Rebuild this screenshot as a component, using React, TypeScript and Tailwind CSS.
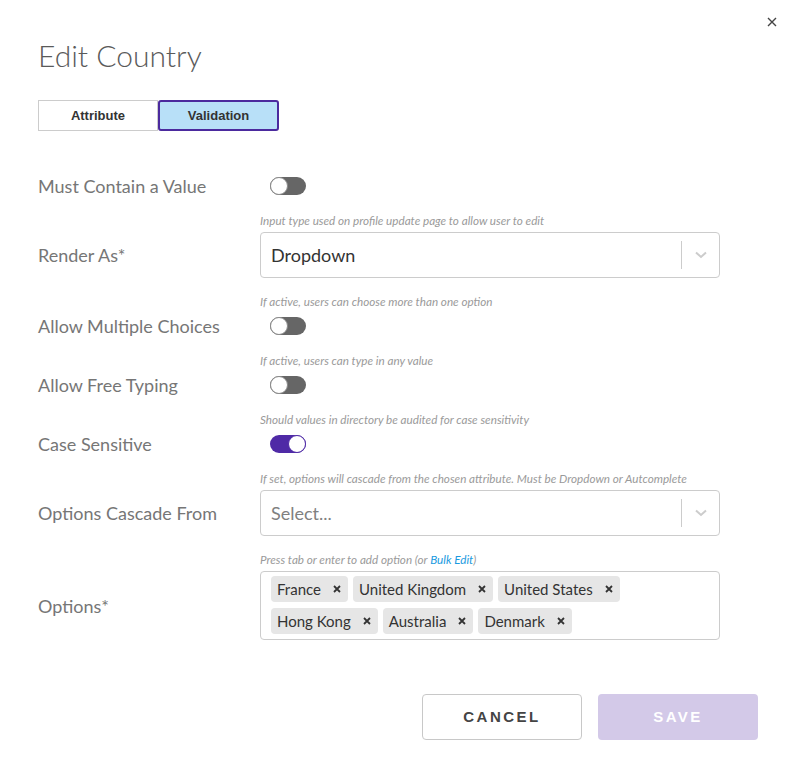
import { useState } from "react";

const lato = { fontFamily: "Lato, 'Open Sans', sans-serif" };

function Toggle({ on }: { on?: boolean }) {
  return (
    <div className="flex h-[25px] items-center pl-[10px]">
      <div
        className={
          "relative h-[18px] w-[36px] rounded-full " + (on ? "bg-[#4f2aa6]" : "bg-[#666666]")
        }
      >
        <div
          className={
            "absolute top-0 h-[18px] w-[18px] rounded-full border bg-white " +
            (on ? "right-0 border-[#4f2aa6]" : "left-0 border-[#8a8a8a]")
          }
        />
      </div>
    </div>
  );
}

function Select({ value, placeholder }: { value?: string; placeholder?: string }) {
  return (
    <div className="flex h-[46px] items-center rounded border border-[#cccccc] bg-white">
      <div
        className={"flex-1 pl-[10px] text-[18px] " + (value ? "text-[#333333]" : "text-[#808080]")}
      >
        {value ?? placeholder}
      </div>
      <div className="h-[28px] w-px bg-[#cccccc]" />
      <div className="flex w-[37px] justify-center">
        <svg width="14" height="8" viewBox="0 0 14 8" fill="none">
          <path d="M2 1.5l5 4.5 5-4.5" stroke="#cccccc" strokeWidth="2" />
        </svg>
      </div>
    </div>
  );
}

function Tag({ label }: { label: string }) {
  return (
    <div className="flex h-[26px] items-center gap-[12px] rounded-sm bg-[#e6e6e6] pl-[6px] pr-[7px] text-[15px] text-[#333333]">
      <span>{label}</span>
      <svg width="8" height="8" viewBox="0 0 8 8">
        <path d="M1 1l6 6M7 1l-6 6" stroke="#333333" strokeWidth="1.8" />
      </svg>
    </div>
  );
}

function Row({
  label,
  hint,
  className = "",
  children,
}: {
  label: string;
  hint?: React.ReactNode;
  className?: string;
  children: React.ReactNode;
}) {
  return (
    <div className={"grid grid-cols-[222px_460px] items-center " + className}>
      {hint ? (
        <>
          <div />
          <div className="mb-[5px] whitespace-nowrap text-[11.7px] italic leading-[14px] text-[#9a9a9a]">
            {hint}
          </div>
        </>
      ) : null}
      <div className="text-[18px] leading-[20px] text-[#767676]">{label}</div>
      <div>{children}</div>
    </div>
  );
}

export default function App() {
  const [tab, setTab] = useState("validation");
  const tags = ["France", "United Kingdom", "United States", "Hong Kong", "Australia", "Denmark"];

  return (
    <div className="relative min-h-[779px] w-[796px] bg-white" style={lato}>
      <button className="absolute right-[15px] top-[13px] p-1">
        <svg width="10" height="10" viewBox="0 0 10 10">
          <path d="M1 1l8 8M9 1l-8 8" stroke="#444444" strokeWidth="1.4" />
        </svg>
      </button>

      <div className="px-[38px] pt-[36px]">
        <h1 className="text-[30px] font-light leading-[38px] text-[#5a5a5a]">Edit Country</h1>

        <div
          className="mt-[26px] flex text-[13px] font-bold text-[#333333]"
          style={{ fontFamily: "'Liberation Sans', Arial, sans-serif" }}
        >
          <button
            onClick={() => setTab("attribute")}
            className="h-[31px] w-[120px] border border-[#cccccc] bg-white"
          >
            Attribute
          </button>
          <button
            onClick={() => setTab("validation")}
            className={
              "h-[31px] w-[121px] rounded-[3px] border-2 border-[#4b2a9e] " +
              (tab === "validation" ? "bg-[#b8e0f8]" : "bg-white")
            }
          >
            Validation
          </button>
        </div>

        <div className="mt-[42px] flex flex-col gap-[15px]">
          <Row label="Must Contain a Value">
            <Toggle />
          </Row>
          <Row label="Render As*" hint="Input type used on profile update page to allow user to edit">
            <Select value="Dropdown" />
          </Row>
          <Row
            label="Allow Multiple Choices"
            hint="If active, users can choose more than one option"
            className="mt-px"
          >
            <Toggle />
          </Row>
          <Row label="Allow Free Typing" hint="If active, users can type in any value">
            <Toggle />
          </Row>
          <Row label="Case Sensitive" hint="Should values in directory be audited for case sensitivity">
            <Toggle on />
          </Row>
          <Row
            label="Options Cascade From"
            hint="If set, options will cascade from the chosen attribute. Must be Dropdown or Autcomplete"
          >
            <Select placeholder="Select..." />
          </Row>
          <Row
            label="Options*"
            className="mt-px"
            hint={
              <>
                Press tab or enter to add option (or <span className="text-[#1a9ae0]">Bulk Edit</span>)
              </>
            }
          >
            <div className="flex min-h-[69px] flex-wrap content-start gap-x-[5px] gap-y-[6px] rounded border border-[#cccccc] bg-white px-[10px] py-[4px]">
              {tags.map((t) => (
                <Tag key={t} label={t} />
              ))}
            </div>
          </Row>
        </div>

        <div
          className="mt-[54px] flex justify-end gap-[16px] text-[15px] font-bold tracking-[2.5px]"
          style={{ fontFamily: "'Liberation Sans', Arial, sans-serif" }}
        >
          <button className="h-[46px] w-[160px] rounded border border-[#c8c8c8] bg-white text-[#444444]">
            CANCEL
          </button>
          <button className="h-[46px] w-[160px] rounded bg-[#d3c9e8] text-white">SAVE</button>
        </div>
      </div>
    </div>
  );
}
